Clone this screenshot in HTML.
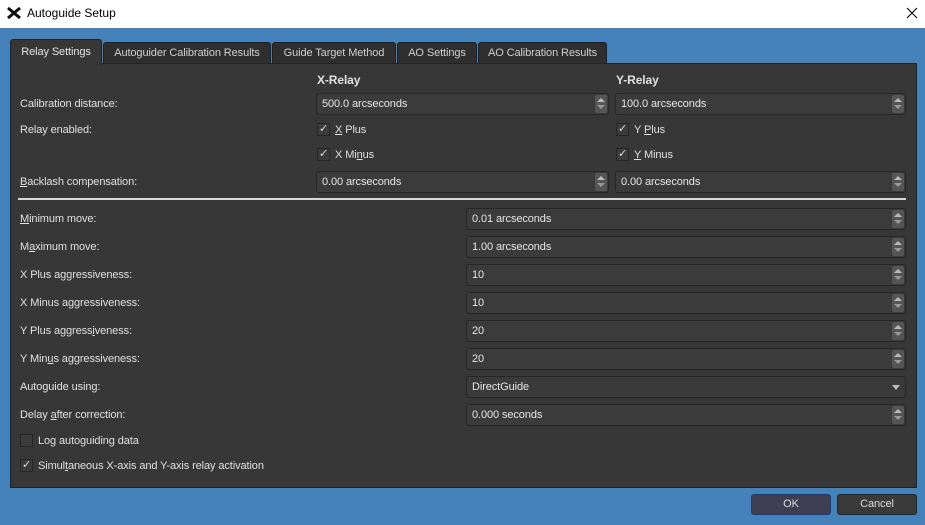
<!DOCTYPE html>
<html><head><meta charset="utf-8"><style>
*{margin:0;padding:0;box-sizing:border-box}
body{width:925px;height:525px;background:#4582b9;font-family:"Liberation Sans",sans-serif;font-size:11px;color:#e2e2e2;position:relative;overflow:hidden;letter-spacing:-0.1px}
.a{position:absolute}
#title{left:0;top:0;width:925px;height:28px;background:#fff;color:#000;font-size:12px;letter-spacing:0}
.tab{position:absolute;top:42px;height:22px;background:#2e2e2e;border:1px solid #1f1f1f;border-bottom:none;border-radius:3px 3px 0 0;color:#d0d0d0;text-align:center;line-height:20px;font-size:11px}
#panel{left:10px;top:63px;width:907px;height:425px;background:#373737;border:1px solid #222}
.lbl{position:absolute;font-size:11px;color:#e0e0e0;white-space:nowrap}
.in{position:absolute;height:22px;background:#3b3b3b;border:1px solid #262626;border-radius:3px;padding-left:5px;line-height:20px;font-size:11px;color:#e6e6e6}
.sp{position:absolute;right:1px;top:1px;width:12px;height:18px;background:#555;border-radius:2px}
.sp:before{content:"";position:absolute;left:2px;top:3px;border:4px solid transparent;border-bottom:4px solid #bbb;border-top:none}
.sp:after{content:"";position:absolute;left:2px;top:10px;border:4px solid transparent;border-top:4px solid #999;border-bottom:none}
.cb{position:absolute;width:13px;height:13px;background:#3b3b3b;border:1px solid #262626;color:#ddd;font-size:11px;line-height:11px;text-align:center}
u{text-decoration:underline}
.btn{position:absolute;top:494px;height:21px;border-radius:3px;text-align:center;line-height:19px;font-size:11px;color:#ddd}
</style></head><body>
<div id="title" class="a">
 <svg class="a" style="left:7px;top:7px" width="14" height="12" viewBox="0 0 14 12"><path d="M1 1 L13 11 M13 1 L1 11" stroke="#111" stroke-width="3"/></svg>
 <span class="a" style="left:27px;top:6px">Autoguide Setup</span>
 <svg class="a" style="left:906px;top:7px" width="12" height="12"><path d="M1 1L11 11M11 1L1 11" stroke="#111" stroke-width="1.2"/></svg>
</div>
<div class="tab" style="left:103px;width:168px">Autoguider Calibration Results</div>
<div class="tab" style="left:272px;width:124px">Guide Target Method</div>
<div class="tab" style="left:397px;width:80px">AO Settings</div>
<div class="tab" style="left:478px;width:129px">AO Calibration Results</div>
<div id="panel" class="a"></div>
<div class="tab" style="left:10px;top:39px;width:92px;height:26px;background:#373737;line-height:24px;color:#e4e4e4;border-color:#222">Relay Settings</div>

<div class="lbl" style="left:317px;top:73px;font-weight:bold;font-size:12px">X-Relay</div>
<div class="lbl" style="left:616px;top:73px;font-weight:bold;font-size:12px">Y-Relay</div>

<div class="lbl" style="left:20px;top:98px">Calibration distance:</div>
<div class="in" style="left:316px;top:93px;width:293px">500.0 arcseconds<div class="sp"></div></div>
<div class="in" style="left:615px;top:93px;width:291px">100.0 arcseconds<div class="sp"></div></div>

<div class="lbl" style="left:20px;top:124px">Relay enabled:</div>
<div class="cb" style="left:317px;top:123px">✓</div><div class="lbl" style="left:335px;top:124px"><u>X</u> Plus</div>
<div class="cb" style="left:317px;top:148px">✓</div><div class="lbl" style="left:335px;top:149px">X Mi<u>n</u>us</div>
<div class="cb" style="left:616px;top:123px">✓</div><div class="lbl" style="left:634px;top:124px">Y <u>P</u>lus</div>
<div class="cb" style="left:616px;top:148px">✓</div><div class="lbl" style="left:634px;top:149px"><u>Y</u> Minus</div>

<div class="lbl" style="left:20px;top:176px"><u>B</u>acklash compensation:</div>
<div class="in" style="left:316px;top:171px;width:293px">0.00 arcseconds<div class="sp"></div></div>
<div class="in" style="left:615px;top:171px;width:291px">0.00 arcseconds<div class="sp"></div></div>

<div class="a" style="left:18px;top:198px;width:888px;height:2px;background:#d8d8d8"></div>

<div class="lbl" style="left:20px;top:213px"><u>M</u>inimum move:</div>
<div class="in" style="left:466px;top:208px;width:440px">0.01 arcseconds<div class="sp"></div></div>
<div class="lbl" style="left:20px;top:241px">M<u>a</u>ximum move:</div>
<div class="in" style="left:466px;top:236px;width:440px">1.00 arcseconds<div class="sp"></div></div>
<div class="lbl" style="left:20px;top:269px">X Plus aggressiveness:</div>
<div class="in" style="left:466px;top:264px;width:440px">10<div class="sp"></div></div>
<div class="lbl" style="left:20px;top:297px">X Minus aggressiveness:</div>
<div class="in" style="left:466px;top:292px;width:440px">10<div class="sp"></div></div>
<div class="lbl" style="left:20px;top:325px">Y Plus aggress<u>i</u>veness:</div>
<div class="in" style="left:466px;top:320px;width:440px">20<div class="sp"></div></div>
<div class="lbl" style="left:20px;top:353px">Y Min<u>u</u>s aggressiveness:</div>
<div class="in" style="left:466px;top:348px;width:440px">20<div class="sp"></div></div>
<div class="lbl" style="left:20px;top:381px">Autoguide using:</div>
<div class="in" style="left:466px;top:376px;width:440px;background:#3a3a3a">DirectGuide<div class="a" style="right:5px;top:8px;border:4px solid transparent;border-top:5px solid #bbb;border-bottom:none"></div></div>
<div class="lbl" style="left:20px;top:409px">Delay <u>a</u>fter correction:</div>
<div class="in" style="left:466px;top:404px;width:440px">0.000 seconds<div class="sp"></div></div>

<div class="cb" style="left:20px;top:434px"></div><div class="lbl" style="left:38px;top:435px">Lo<u>g</u> autoguiding data</div>
<div class="cb" style="left:20px;top:459px">✓</div><div class="lbl" style="left:38px;top:460px">Simul<u>t</u>aneous X-axis and Y-axis relay activation</div>

<div class="btn" style="left:751px;width:80px;background:#3e3f52;border:1px solid #1d3a80">OK</div>
<div class="btn" style="left:837px;width:80px;background:#3a3a3a;border:1px solid #262626">Cancel</div>
</body></html>
